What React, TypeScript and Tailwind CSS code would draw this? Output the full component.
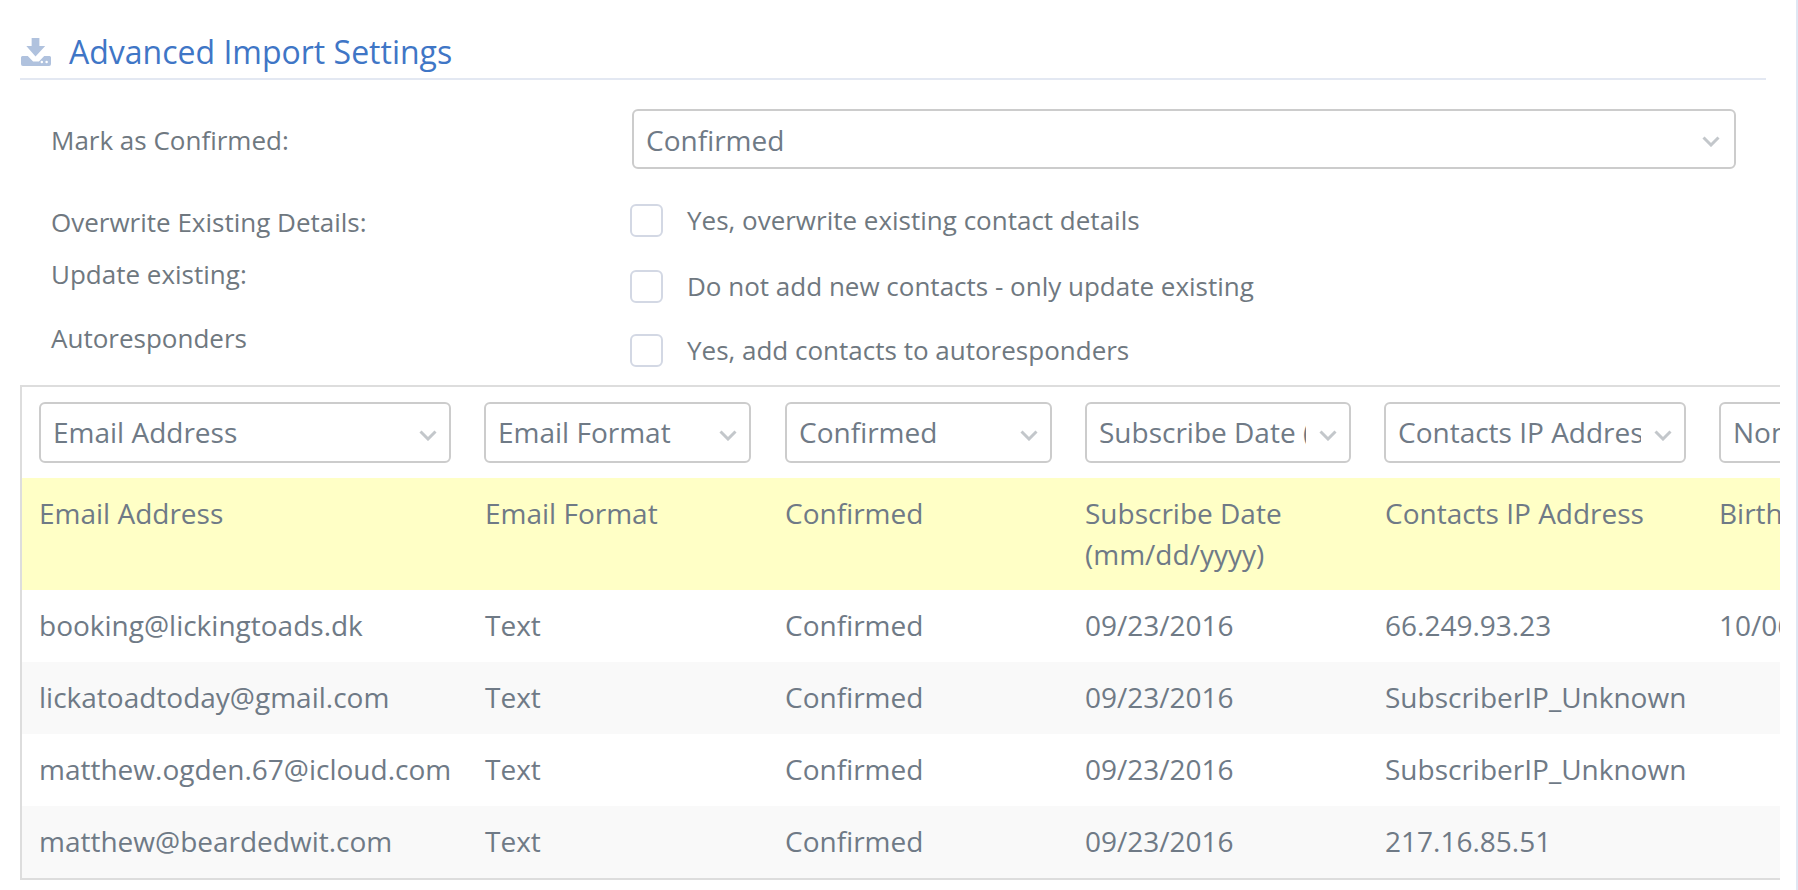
import React from "react";

const font = "font-['Open_Sans',sans-serif]";

function Chevron({ className }: { className: string }) {
  return (
    <svg width="18" height="11" viewBox="0 0 18 11" className={`absolute ${className}`} fill="none">
      <path d="M1.5 1.5 L9 9 L16.5 1.5" stroke="#c3c7cb" strokeWidth="3" />
    </svg>
  );
}

function Select({ label, className }: { label: string; className: string }) {
  return (
    <div className={`relative h-[61px] shrink-0 rounded-[6px] border-2 border-[#cccccc] bg-white pl-[12px] pr-[43px] text-[28px] leading-[56px] text-[#6f7a86] ${className}`}>
      <div className="overflow-hidden whitespace-nowrap">{label}</div>
      <Chevron className="right-[12px] top-[26px]" />
    </div>
  );
}

function Check({ label, gap }: { label: string; gap: string }) {
  return (
    <div className="flex items-center">
      <div className="h-[33px] w-[33px] rounded-[6px] border-2 border-[#d3d8e4] bg-white" />
      <span className={`text-[26px] leading-[36px] text-[#6f7880] ${gap}`}>{label}</span>
    </div>
  );
}

const widths = ["w-[446px]", "w-[300px]", "w-[300px]", "w-[300px]", "w-[334px]", "w-[120px]"];

const rows = [
  ["booking@lickingtoads.dk", "Text", "Confirmed", "09/23/2016", "66.249.93.23", "10/06/1980"],
  ["lickatoadtoday@gmail.com", "Text", "Confirmed", "09/23/2016", "SubscriberIP_Unknown", ""],
  ["matthew.ogden.67@icloud.com", "Text", "Confirmed", "09/23/2016", "SubscriberIP_Unknown", ""],
  ["matthew@beardedwit.com", "Text", "Confirmed", "09/23/2016", "217.16.85.51", ""],
];

export default function App() {
  return (
    <div className={`h-[890px] w-[1798px] overflow-hidden border-r-2 border-[#dfe7f3] bg-white ${font}`}>
      <div className="pl-[20px] pr-[16px] pt-[32px]">
        <div className="flex h-[48px] w-[1746px] items-center border-b-2 border-[#e3e8f2] pb-[6px]">
          <svg width="30" height="28" viewBox="0 0 31 28" preserveAspectRatio="none" className="ml-[1px] shrink-0">
            <path d="M11 0h8v8h6L15 18.5 5.5 8H11z" fill="#b0c2de" />
            <path d="M1.5 18H7l5.500 5.500h6L24 18h5.500A1.500 1.500 0 0 1 31 19.500V26a2 2 0 0 1-2 2H2a2 2 0 0 1-2-2v-6.500A1.500 1.500 0 0 1 1.500 18z" fill="#b0c2de" />
            <circle cx="21.500" cy="24" r="1.300" fill="#fff" />
            <circle cx="26.500" cy="24" r="1.300" fill="#fff" />
          </svg>
          <h2 className="ml-[18px] text-[32px] font-normal leading-[40px] text-[#3f76c6]">Advanced Import Settings</h2>
        </div>
      </div>

      <div className="ml-[51px] mt-[29px] flex">
        <div className="w-[579px] text-[26px] text-[#6f7880]">
          <div className="mt-[1px] flex h-[61px] items-center">Mark as Confirmed:</div>
          <div className="mt-[33px] leading-[36px]">Overwrite Existing Details:</div>
          <div className="mt-[16px] leading-[36px]">Update existing:</div>
          <div className="mt-[28px] leading-[36px]">Autoresponders</div>
        </div>
        <div className="w-[1106px]">
          <div className="relative ml-[2px] h-[60px] w-[1104px] rounded-[6px] border-2 border-[#cccccc] pl-[12px] text-[28px] leading-[58px] text-[#6f7a86]">
            Confirmed
            <Chevron className="right-[14px] top-[25px]" />
          </div>
          <div className="mt-[33px]"><Check label="Yes, overwrite existing contact details" gap="ml-[24px]" /></div>
          <div className="mt-[30px]"><Check label="Do not add new contacts - only update existing" gap="ml-[24px]" /></div>
          <div className="mt-[28px]"><Check label="Yes, add contacts to autoresponders" gap="ml-[24px]" /></div>
        </div>
      </div>

      <div className="ml-[20px] mt-[17px] h-[495px] w-[1760px] overflow-hidden border-y-2 border-l-2 border-[#dddddd]">
        <div className="flex h-[91px] w-[1900px] items-start pl-[17px] pt-[15px]">
          <Select label="Email Address" className="mr-[33px] w-[412px]" />
          <Select label="Email Format" className="mr-[34px] w-[267px]" />
          <Select label="Confirmed" className="mr-[33px] w-[267px]" />
          <Select label="Subscribe Date (mm/dd/yyyy)" className="mr-[33px] w-[266px]" />
          <Select label="Contacts IP Address" className="mr-[33px] w-[302px]" />
          <Select label="None" className="w-[267px]" />
        </div>
        <div className="flex h-[112px] w-[1900px] bg-[#ffffc6] pl-[17px] pt-[15px] text-[28px] leading-[41px] text-[#6f7a86]">
          {["Email Address", "Email Format", "Confirmed", "Subscribe Date (mm/dd/yyyy)", "Contacts IP Address", "Birthday"].map((h, i) => (
            <div key={h} className={`shrink-0 ${widths[i]} ${i === 3 ? "pr-[60px]" : ""}`}>{h}</div>
          ))}
        </div>
        {rows.map((r, ri) => (
          <div key={r[0]} className={`flex h-[72px] w-[1900px] items-center pb-[2px] pl-[17px] text-[28px] text-[#6f7a86] ${ri % 2 === 1 ? "bg-[#f9f9f9]" : "bg-white"}`}>
            {r.map((c, i) => (
              <div key={i} className={`shrink-0 whitespace-nowrap ${widths[i]}`}>{c}</div>
            ))}
          </div>
        ))}
      </div>
    </div>
  );
}
